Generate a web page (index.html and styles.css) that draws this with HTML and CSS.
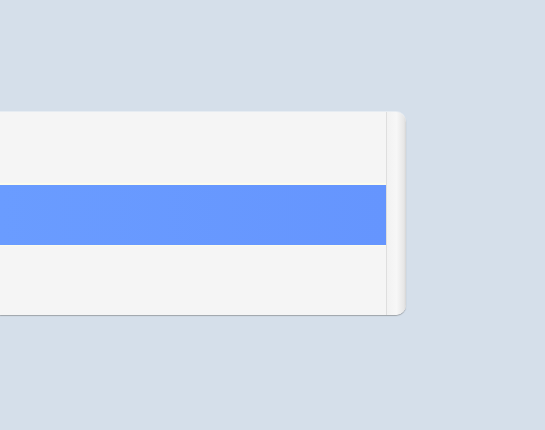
FILE: index.html
```html
<!DOCTYPE html>
<html>
<head>
<meta charset="utf-8">
<link rel="stylesheet" href="styles.css">
</head>
<body>
<div class="stage">
  <div class="card">
    <div class="track">
      <div class="bar"></div>
    </div>
    <div class="cap"></div>
  </div>
</div>
</body>
</html>
```
FILE: styles.css
```css
html, body {
  margin: 0;
  padding: 0;
  background: #d5dfea;
  font-family: "Liberation Sans", Arial, sans-serif;
}
.stage {
  padding-top: 112px;
  height: 318px;
}
.card {
  display: flex;
  width: 406px;
  height: 203px;
  background: #f5f5f5;
  border-radius: 0 10px 10px 0;
  box-shadow: 0 1px 1px rgba(90, 90, 90, 0.45), 0 -1px 0 rgba(255,255,255,0.4);
  overflow: hidden;
}
.track {
  flex: 1;
  padding-top: 73px;
}
.bar {
  height: 60px;
  background: linear-gradient(to right, #6a9cff, #6595fe);
  box-shadow: 0 -2px 1px #fbfbee, 0 1px 1px #fbfbee;
}
.cap {
  width: 19px;
  border-left: 1px solid #dedede;
  background: linear-gradient(to right, #f2f2f2, #f7f7f7 50%, #e6e6e6 90%, #d4d4d4);
  border-radius: 0 10px 10px 0;
}
```
